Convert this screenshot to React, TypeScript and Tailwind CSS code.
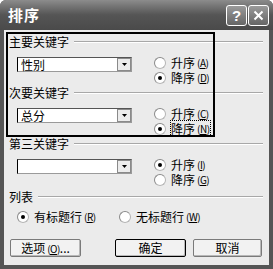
import type { ReactNode } from 'react';

const FONT = { fontFamily: '"Noto Sans CJK SC", "DejaVu Sans", sans-serif' };

function Key({ k }: { k: string }) {
  return (
    <span className="ml-[2px] text-[10px] leading-[15px] tracking-[-0.5px]">
      (<span className="underline">{k}</span>)
    </span>
  );
}

function Radio({ checked, children }: { checked?: boolean; children: ReactNode }) {
  return (
    <div className="flex items-center h-[15px] gap-[5px]">
      <span className="w-[12px] h-[12px] rounded-full bg-white border border-[#b5b5b5] border-l-[#8a8a8a] border-t-[#8a8a8a] flex items-center justify-center shrink-0">
        {checked && <span className="w-[4px] h-[4px] rounded-full bg-black" />}
      </span>
      <span className="flex items-center text-[12px] leading-[15px] text-black whitespace-nowrap">{children}</span>
    </div>
  );
}

function GroupLabel({ text }: { text: string }) {
  return (
    <div className="flex items-center h-[16px] pl-[5px] pr-[6px] gap-[5px]">
      <span className="text-[12px] leading-[16px] text-black whitespace-nowrap">{text}</span>
      <div className="flex-1 flex flex-col">
        <div className="h-px bg-[#a8a8a8]" />
        <div className="h-px bg-white" />
      </div>
    </div>
  );
}

function Combo({ value }: { value: string }) {
  return (
    <div className="ml-[13px] mt-[2px] w-[115px] h-[15px] bg-white border border-[#9a9a9a] border-l-black border-t-[#555] flex items-center">
      <span className="flex-1 pl-[3px] text-[12px] leading-[13px] text-black">{value}</span>
      <div className="w-[14px] h-[13px] bg-[#ececec] border border-[#8a8a8a] flex items-center justify-center">
        <svg width="5" height="3" viewBox="0 0 5 3"><path d="M0 0h5L2.5 3z" fill="#000" /></svg>
      </div>
    </div>
  );
}

function KeyGroup({ label, value, asc, descKey, ascKey, focus, h }: {
  label: string; value: string; asc: boolean; ascKey: string; descKey: string; focus?: boolean; h: string;
}) {
  return (
    <div className={`flex flex-col ${h}`}>
      <GroupLabel text={label} />
      <div className="flex mt-[5px]">
        <Combo value={value} />
        <div className="ml-[22px] flex flex-col">
          <Radio checked={asc}>升序<Key k={ascKey} /></Radio>
          <Radio checked={!asc}>
            <span className={`flex items-center ${focus ? 'outline outline-1 outline-dotted outline-black' : ''}`}>
              降序<Key k={descKey} />
            </span>
          </Radio>
        </div>
      </div>
    </div>
  );
}

function Btn({ children, w, def }: { children: ReactNode; w: string; def?: boolean }) {
  return (
    <button className={`${w} h-[18px] bg-[#f2f2f2] text-[12px] leading-[14px] text-black flex items-center justify-center rounded-[2px] border ${def ? 'border-black' : 'border-[#7a7a7a]'} shadow-[inset_-1px_-1px_0_#b8b8b8]`}>
      {children}
    </button>
  );
}

export default function App() {
  return (
    <div className="w-[273px] h-[269px] bg-[#555] rounded-t-[6px] flex flex-col overflow-hidden" style={FONT}>
      {/* Title */}
      <div className="h-[30px] flex items-center px-[8px] bg-gradient-to-b from-[#8c8c8c] via-[#555] to-[#4a4a4a]">
        <span className="flex-1 text-white font-bold text-[15px] tracking-[1px]">排序</span>
        <div className="flex gap-[1px] -mr-[4px]">
          <div className="w-[21px] h-[21px] rounded-[3px] border border-white bg-gradient-to-b from-[#9a9a9a] to-[#666] flex items-center justify-center text-white font-bold text-[15px] leading-none" style={{ fontFamily: '"Liberation Sans", sans-serif' }}>?</div>
          <div className="w-[21px] h-[21px] rounded-[3px] border border-white bg-gradient-to-b from-[#9a9a9a] to-[#666] flex items-center justify-center">
            <svg width="11" height="11" viewBox="0 0 11 11"><path d="M1.5 1.5l8 8M9.5 1.5l-8 8" stroke="#fff" strokeWidth="2" /></svg>
          </div>
        </div>
      </div>

      {/* Body */}
      <div className="relative flex-1 mx-[4px] mb-[4px] bg-[#ebebeb] flex flex-col pt-[4px]">
        <KeyGroup label="主要关键字" value="性别" asc={false} ascKey="A" descKey="D" h="h-[51px]" />
        <KeyGroup label="次要关键字" value="总分" asc={false} ascKey="C" descKey="N" focus h="h-[51px]" />
        <KeyGroup label="第三关键字" value="" asc={true} ascKey="I" descKey="G" h="h-[53px]" />

        <GroupLabel text="列表" />
        <div className="flex mt-[4px] pl-[13px]">
          <div className="w-[102px]"><Radio checked>有标题行<Key k="R" /></Radio></div>
          <Radio>无标题行<Key k="W" /></Radio>
        </div>

        <div className="flex mt-[15px] pl-[6px] pr-[7px]">
          <Btn w="w-[71px]">选项<Key k="O" />...</Btn>
          <div className="flex-1" />
          <Btn w="w-[71px]" def>确定</Btn>
          <div className="w-[7px]" />
          <Btn w="w-[69px]">取消</Btn>
        </div>

        {/* annotation frame drawn over the dialog */}
        <div className="absolute left-[2px] top-[2px] w-[209px] h-[105px] border-2 border-black pointer-events-none" />
      </div>
    </div>
  );
}
